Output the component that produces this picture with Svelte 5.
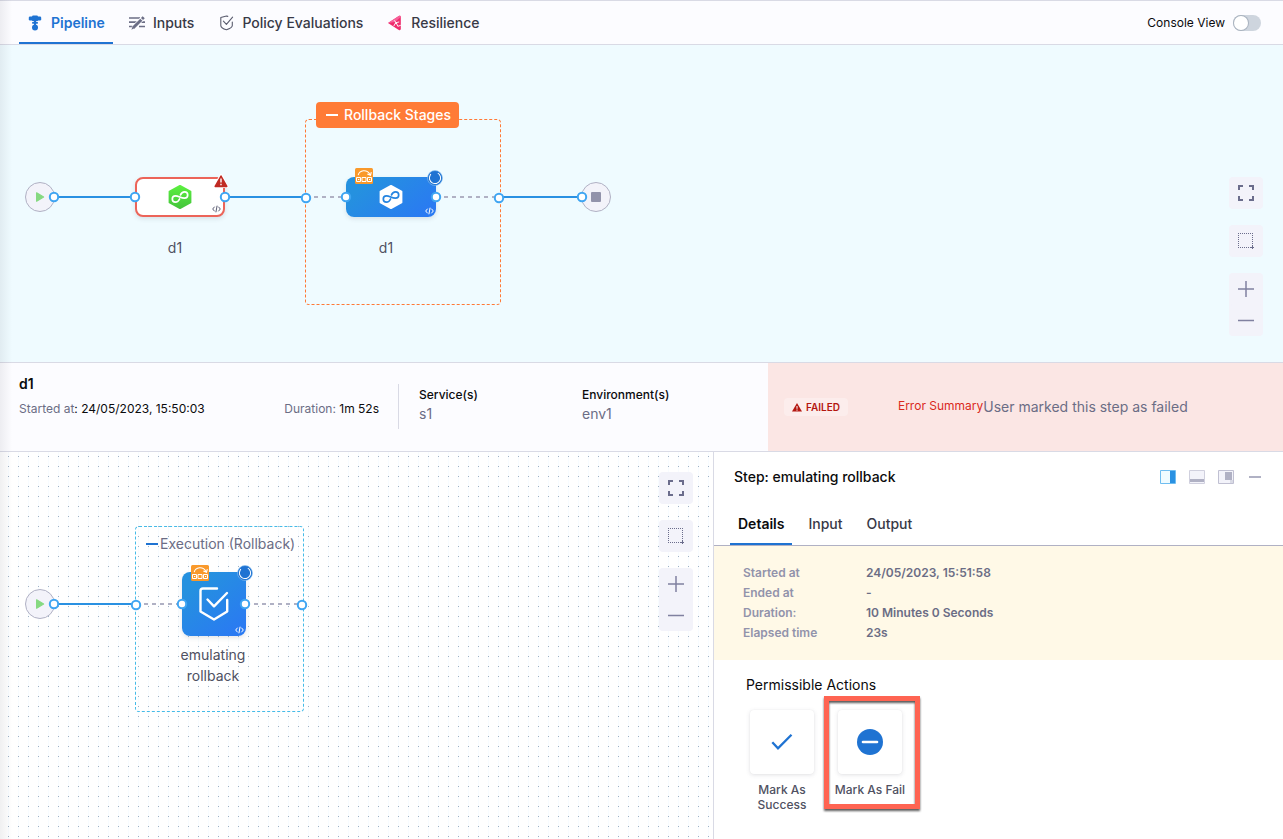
<script>
  let consoleView = $state(false);
  let activeTab = $state('Pipeline');
  let activeStepTab = $state('Details');

  const tabs = ['Pipeline', 'Inputs', 'Policy Evaluations', 'Resilience'];
  const stepTabs = ['Details', 'Input', 'Output'];
  const details = [
    ['Started at', '24/05/2023, 15:51:58'],
    ['Ended at', '-'],
    ['Duration:', '10 Minutes 0 Seconds'],
    ['Elapsed time', '23s']
  ];
  const stagePorts = [[54, 152], [135, 152], [225, 152], [306, 153], [346, 152], [436, 152], [499, 153], [582, 152]];
  const stepPorts = [[54, 152], [136, 153], [182, 152], [245, 152], [302, 153]];
</script>

{#snippet ports(list)}
  <svg class="layer" aria-hidden="true">
    {#each list as [x, y]}
      <circle cx={x} cy={y} r="4.2" fill="#fff" stroke="#3fa5f2" stroke-width="2" />
    {/each}
  </svg>
{/snippet}

{#snippet startNode()}
  <div class="node terminal start">
    <svg width="10" height="12" viewBox="0 0 10 12"><path d="M1.6 1.8v8.4L8.6 6z" fill="#86d981" stroke="#86d981" stroke-width="1.2" stroke-linejoin="round" /></svg>
  </div>
{/snippet}

{#snippet infinity(color)}
  <path d="M11.600 14C10.600 16.200 9.300 17.200 7.500 17.200A3.200 3.200 0 1 1 7.500 10.800C10.500 10.800 13.300 13.400 16.500 13.200A3.200 3.200 0 1 0 16.500 6.800C14.600 6.800 13.300 7.900 12.500 9.900" fill="none" stroke={color} stroke-width="1.700" stroke-linecap="round" />
{/snippet}

{#snippet code(color)}
  <svg class="code" width="9" height="8" viewBox="0 0 9 8" fill="none" stroke={color} stroke-width="1"><path d="M2.600 1.700.7 4l1.900 2.300M6.400 1.700 8.300 4 6.400 6.300M5.100.7 3.900 7.300" /></svg>
{/snippet}

{#snippet rollbackBadge()}
  <svg class="rollback" width="18" height="16" viewBox="0 0 18 16">
    <rect width="18" height="16" rx="1.500" fill="#f9992b" />
    <path d="M3.200 7.200C4.400 1.900 12 1 15 6.400M12.300 6.100l3.200 1.200.8-3.100" fill="none" stroke="#fff" stroke-width="1.100" />
    <path d="M1.500 9.500h4v4h-4zM7 9.500h4v4H7zM12.500 9.500h4v4h-4z" fill="none" stroke="#fff" stroke-width="1" />
    <path d="M3 11.500h1.300M14 11.500h1.200" stroke="#fff" stroke-width="1" />
  </svg>
{/snippet}

{#snippet runningBadge()}
  <svg class="running" width="16" height="16" viewBox="0 0 16 16">
    <circle cx="8" cy="8" r="7.500" fill="#1f73d2" stroke="#8fc4f4" stroke-width=".6" />
    <circle cx="8" cy="8" r="5.600" fill="none" stroke="#fff" stroke-width="1" stroke-dasharray="27 8.200" transform="rotate(-60 8 8)" />
  </svg>
{/snippet}

{#snippet canvasTools()}
  <div class="tools">
    <button aria-label="Fit to screen"><svg width="16" height="16" viewBox="0 0 16 16" fill="none" stroke="#6b6d8c" stroke-width="2"><path d="M1 5V1h4M11 1h4v4M15 11v4h-4M5 15H1v-4" /></svg></button>
    <button aria-label="Select area"><svg width="16" height="16" viewBox="0 0 16 16" fill="none" stroke="#6b6d8c" stroke-width="1"><path d="M0 .5h15M0 14.500h15M.5 0v15M14.500 0v15" stroke-dasharray="1 1" /><path d="M14.500 13v3M13 14.500h3" /></svg></button>
    <div class="zoom">
      <button aria-label="Zoom in"><svg width="16" height="16" viewBox="0 0 16 16" stroke="#8081a0" stroke-width="1.500"><path d="M0 8h16M8 0v16" /></svg></button>
      <button aria-label="Zoom out"><svg width="16" height="16" viewBox="0 0 16 16" stroke="#8081a0" stroke-width="1.500"><path d="M0 7.500h16" /></svg></button>
    </div>
  </div>
{/snippet}

<div class="page">
  <header>
    <nav class="tabs">
      {#each tabs as tab}
        <button class="tab" class:active={tab === activeTab} onclick={() => (activeTab = tab)}>
          {#if tab === 'Pipeline'}
            <svg width="16" height="16" viewBox="0 0 16 16" fill="#1f73d2"><rect x="5" y=".5" width="6" height="5.800" rx="1.200" /><rect x="1.800" y="1.500" width="12.400" height="4" rx="1.200" /><path d="M7 6h2v4H7z" /><rect x="5" y="7" width="6" height="1.800" rx=".7" /><circle cx="8" cy="12.500" r="3" /></svg>
          {:else if tab === 'Inputs'}
            <svg width="16" height="16" viewBox="0 0 16 16" fill="none" stroke="#6b6d85"><path d="M0 3h11M0 7.200h8M0 11.500h4M10 11.500h6M12 7.200h4" stroke-width="1.700" /><path d="M4.200 12.800 14 3" stroke="#fcfcff" stroke-width="4.500" /><path d="m4 13 8.300-8.300" stroke-width="3" /><path d="m13 4 1.700-1.700" stroke-width="3" /><path d="m2.300 14.700 1.200-2.400 1.300 1.200z" fill="#6b6d85" stroke="none" /></svg>
          {:else if tab === 'Policy Evaluations'}
            <svg width="16" height="16" viewBox="0 0 16 16" fill="none" stroke="#5a5c6e" stroke-width="1.100" stroke-linecap="round" stroke-linejoin="round"><path d="M9.800 1.400 8.500 1 2.800 2.500v8c0 1.900 3.500 3.700 5.700 4.300 2.400-.8 5.800-2.400 5.800-4.300V7M5.400 6.200l3 3.200 6.200-7.200" /></svg>
          {:else}
            <svg width="16" height="16" viewBox="0 0 16 16"><path d="M1 8.100 11.800 1c1-.6 2 0 2 1v12c0 1-1 1.500-2 1z" fill="#ee2b6c" /><path d="M1 8.100 11.800 1c1-.6 2 0 2 1L8 7z" fill="#f7609a" /><path d="m7.200 5.300 2 2.400 3-.8M6.800 11l1.800-3.200M9.300 7.800l1.500 3.500 3-1" fill="none" stroke="#fff" stroke-width=".9" /><circle cx="9" cy="8" r="1" fill="#fff" /></svg>
          {/if}
          <span>{tab}</span>
        </button>
      {/each}
    </nav>
    <label class="switch">Console View <input type="checkbox" role="switch" bind:checked={consoleView} /></label>
  </header>

  <section class="canvas stages" aria-label="Stages">
    <svg class="layer" aria-hidden="true">
      <path d="M54 152H306M499 152H582" stroke="#2a91e2" stroke-width="2" />
      <path d="M314 152H341M444 152H494" stroke="#b0b1c4" stroke-width="2" stroke-dasharray="4 4" />
    </svg>
    {@render startNode()}
    <div class="node group rollback-group"></div>
    <button class="node group-label"><svg width="12" height="2" viewBox="0 0 12 2"><path d="M0 1h12" stroke="#fff" stroke-width="2" /></svg>Rollback Stages</button>

    <div class="node stage failed">
      <svg width="24" height="24" viewBox="0 0 24 24">
        <defs><linearGradient id="cd" x1="0" y1="0" x2="0" y2="1"><stop stop-color="#5aef3f" /><stop offset="1" stop-color="#45c53c" /></linearGradient></defs>
        <path d="M12 1 22.400 6.600v10.800L12 23 1.600 17.400V6.600z" fill="url(#cd)" stroke="url(#cd)" stroke-width="2" stroke-linejoin="round" />
        {@render infinity('#fff')}
      </svg>
      {@render code('#5a5c72')}
      <svg class="warn" width="16" height="15" viewBox="0 0 16 15"><path d="M8 1.500 14 12.500H2z" fill="#c02b23" stroke="#fff" stroke-width="3" stroke-linejoin="round" /><path d="M8 2 13.800 12.400H2.200z" fill="#c02b23" stroke="#c02b23" stroke-width="1.500" stroke-linejoin="round" /><path d="M8 4.500v4M8 9.800v1.400" stroke="#fff" stroke-width="1.400" /></svg>
    </div>
    <div class="node caption first">d1</div>

    <div class="node stage running-stage">
      <svg width="24" height="24" viewBox="0 0 24 24">
        <path d="M12 1 22.400 6.600v10.800L12 23 1.600 17.400V6.600z" fill="#fff" stroke="#fff" stroke-width="2" stroke-linejoin="round" />
        {@render infinity('#2484e0')}
      </svg>
      {@render code('#fff')}
      {@render rollbackBadge()}
      {@render runningBadge()}
    </div>
    <div class="node caption second">d1</div>

    <div class="node terminal end"><i></i></div>
    {@render ports(stagePorts)}
    {@render canvasTools()}
  </section>

  <section class="summary">
    <div class="facts">
      <div class="run">
        <h2>d1</h2>
        <div class="times">
          <span><em>Started at</em>: 24/05/2023, 15:50:03</span>
          <span><em>Duration:</em> 1m 52s</span>
        </div>
      </div>
      <div class="fact"><strong>Service(s)</strong><span>s1</span></div>
      <div class="fact"><strong>Environment(s)</strong><span>env1</span></div>
    </div>
    <div class="error">
      <span class="chip"><svg width="10" height="9" viewBox="0 0 10 9"><path d="M5 0 10 8.500H0z" fill="#b41710" /><path d="M5 3v2.800M5 6.500v1.200" stroke="#fff" stroke-width="1" /></svg>FAILED</span>
      <span class="error-title">Error Summary</span><span class="error-text">User marked this step as failed</span>
    </div>
  </section>

  <div class="lower">
    <section class="canvas steps" aria-label="Steps">
      <svg class="layer" aria-hidden="true">
        <defs><pattern id="dots" width="10" height="10" patternUnits="userSpaceOnUse"><rect x="8" width="1" height="10" fill="#f8fcff" /><rect x="8" y="4" width="1" height="1" fill="#9fb2c6" /></pattern></defs>
        <rect width="100%" height="100%" fill="url(#dots)" />
        <path d="M54 152H136" stroke="#2a91e2" stroke-width="2" />
        <path d="M144 152H177M254 152H298" stroke="#b0b1c4" stroke-width="2" stroke-dasharray="4 4" />
      </svg>
      {@render startNode()}
      <div class="node group exec-group">
        <button><svg width="12" height="2" viewBox="0 0 12 2"><path d="M0 1h12" stroke="#1f73d2" stroke-width="2" /></svg>Execution (Rollback)</button>
      </div>
      <div class="node step">
        <svg width="32" height="36" viewBox="0 0 32 36" fill="none" stroke="#fff" stroke-width="2.400" stroke-linecap="round" stroke-linejoin="round"><path d="M19 2.500H5c-1.500 0-2.500 1-2.500 2.500v20.500L16 33.500l13.200-8V14M9.500 13.500l6.500 6.800L29 7" /></svg>
        {@render code('#fff')}
        {@render rollbackBadge()}
        {@render runningBadge()}
      </div>
      <div class="node caption step-name">emulating rollback</div>
      {@render ports(stepPorts)}
      {@render canvasTools()}
    </section>

    <aside>
      <div class="panel-head">
        <h2>Step: emulating rollback</h2>
        <div class="layouts">
          <button aria-label="Dock right"><svg width="16" height="14" viewBox="0 0 16 14"><path d="M.5.500h15v13H.5z" fill="#effbff" stroke="#6fbdf0" /><path d="M10 1h5v12h-5z" fill="#2a91e2" /></svg></button>
          <button aria-label="Dock bottom"><svg width="16" height="14" viewBox="0 0 16 14"><path d="M.5.500h15v13H.5z" fill="#f3f3fa" stroke="#d0d0de" /><path d="M1 9h14v3H1z" fill="#b0b1c4" /></svg></button>
          <button aria-label="Float"><svg width="16" height="14" viewBox="0 0 16 14"><path d="M.5.500h15v13H.5z" fill="#f3f3fa" stroke="#c0c0d2" /><path d="M7 2h7v8H7z" fill="#b0b1c4" /><path d="M12 10h3v3h-3z" fill="#d9dae5" /></svg></button>
          <button aria-label="Minimise"><svg width="12" height="14" viewBox="0 0 12 14"><path d="M0 7h12" stroke="#b0b1c4" stroke-width="2" /></svg></button>
        </div>
      </div>
      <nav class="step-tabs">
        {#each stepTabs as tab}
          <button class:active={tab === activeStepTab} onclick={() => (activeStepTab = tab)}>{tab}</button>
        {/each}
      </nav>
      <dl>
        {#each details as [name, value]}
          <dt>{name}</dt><dd>{value}</dd>
        {/each}
      </dl>
      <div class="actions">
        <h3>Permissible Actions</h3>
        <div class="action-row">
          <button class="action">
            <span class="tile"><svg width="22" height="18" viewBox="0 0 22 18"><path d="m1.300 9.300 5.700 6L20.500 1.800" fill="none" stroke="#1f73d2" stroke-width="2.300" /></svg></span>
            Mark As Success
          </button>
          <button class="action outlined">
            <span class="tile"><svg width="26" height="26" viewBox="0 0 26 26"><circle cx="13" cy="13" r="13" fill="#1f73d2" /><path d="M6 13h14" stroke="#fff" stroke-width="2.600" stroke-linecap="round" /></svg></span>
            Mark As Fail
          </button>
        </div>
      </div>
    </aside>
  </div>
</div>

<style>
  :global(body) { margin: 0; }
  .page {
    position: relative;
    display: flex;
    flex-direction: column;
    min-height: 100vh;
    font-family: Inter, sans-serif;
    font-size: 14px;
    line-height: 20px;
    color: #0b0b0d;
    background: #fff;
  }
  .page::after {
    content: '';
    position: absolute;
    inset: 0 auto 0 0;
    width: 12px;
    background: linear-gradient(90deg, rgba(40, 41, 61, 0.07), rgba(40, 41, 61, 0));
    pointer-events: none;
  }
  button {
    padding: 0;
    border: 0;
    background: none;
    font: inherit;
    color: inherit;
    cursor: pointer;
  }
  svg { display: block; flex: none; }
  h2, h3, dl, dd { margin: 0; }
  * { box-sizing: border-box; }

  header {
    display: flex;
    justify-content: space-between;
    height: 45px;
    padding: 0 22px 0 19px;
    border: solid #d9dae5;
    border-width: 1px 0;
    background: #fcfcff;
  }
  .tabs { display: flex; gap: 8px; }
  .tab {
    display: flex;
    align-items: center;
    gap: 8px;
    padding: 2px 8px 0;
    border-bottom: 2px solid transparent;
    font-weight: 500;
    color: #383946;
  }
  .tab.active { color: #1f73d2; font-weight: 600; border-color: #1f73d2; }
  .switch { display: flex; align-items: center; gap: 8px; font-size: 12px; }
  .switch input {
    appearance: none;
    width: 28px;
    height: 16px;
    margin: 0;
    padding: 1px;
    border-radius: 8px;
    background: #ced5de;
  }
  .switch input::before {
    content: '';
    display: block;
    width: 14px;
    height: 14px;
    border-radius: 50%;
    background: #fff;
    box-shadow: 0 0 0 1px #a9b3bf;
  }
  .switch input:checked { background: #1f73d2; padding-left: 13px; }

  .canvas { position: relative; overflow: hidden; }
  .stages { height: 318px; background: #effbff; border-bottom: 1px solid #d9dae5; }
  .layer { position: absolute; inset: 0; width: 100%; height: 100%; pointer-events: none; }
  .node { position: absolute; }
  .terminal {
    display: grid;
    place-items: center;
    top: 137px;
    width: 30px;
    height: 30px;
    border: 1px solid #b0b1c4;
    border-radius: 50%;
    background: #f3f3fa;
  }
  .start { left: 25px; }
  .end { left: 581px; }
  .end i { width: 10px; height: 10px; border-radius: 1px; background: #9293ab; }
  .group { border: 1px dashed; border-radius: 4px; }
  .rollback-group { left: 305px; top: 74px; width: 196px; height: 186px; border-color: #ff7935; }
  .group-label {
    left: 316px;
    top: 57px;
    display: flex;
    align-items: center;
    gap: 6px;
    height: 26px;
    padding: 0 8px 0 10px;
    border-radius: 4px;
    background: #ff7b36;
    color: #fff;
    font-weight: 500;
  }
  .stage, .step {
    display: grid;
    place-items: center;
    border-radius: 8px;
    box-shadow: 0 2px 4px rgba(96, 97, 112, 0.16);
  }
  .stage { top: 132px; width: 90px; height: 40px; }
  .failed { left: 135px; border: 2px solid #ec6459; background: #fff; }
  .running-stage { left: 346px; }
  .running-stage, .step { background: linear-gradient(140deg, #2591df 20%, #2a7af2 90%); }
  .code { position: absolute; right: 2px; bottom: 2px; }
  .warn { position: absolute; right: -6px; top: -5px; }
  .rollback { position: absolute; left: 9px; top: -9px; }
  .step .rollback { top: -7px; }
  .running { position: absolute; right: -7px; top: -7px; }
  .caption { text-align: center; color: #4f5162; }
  .first, .second { top: 193px; width: 80px; }
  .first { left: 135px; }
  .second { left: 346px; }

  .tools { position: absolute; top: 20px; right: 20px; display: grid; gap: 16px; }
  .stages .tools { top: 132px; }
  .tools button { display: grid; place-items: center; width: 34px; height: 32px; border-radius: 4px; background: #f3f3fa; }
  .tools .zoom button:last-child { height: 31px; }
  .zoom { border-radius: 4px; background: #f3f3fa; overflow: hidden; }

  .summary { display: flex; min-height: 89px; border-bottom: 1px solid #d9dae5; }
  .facts { flex: 0 1 768px; display: flex; padding: 11px 0 0 19px; background: #fcfcff; }
  .run { position: relative; flex: 0 0 380px; padding-right: 20px; }
  .run::after {
    content: '';
    position: absolute;
    right: 0;
    top: 10px;
    height: 45px;
    border-left: 1px solid #d9dae5;
  }
  h2 { font-size: 14px; font-weight: 600; line-height: 20px; }
  .times { display: flex; justify-content: space-between; margin-top: 5px; font-size: 12px; }
  em { font-style: normal; color: #6b6d85; }
  .fact { display: flex; flex-direction: column; width: 143px; margin: 12px 0 0 20px; color: #6b6d85; }
  .fact strong { font-size: 12px; font-weight: 500; color: #0b0b0d; line-height: 18px; }
  .error { flex: 1; display: flex; align-items: center; padding: 0 16px; background: #fbe6e4; }
  .chip {
    display: flex;
    align-items: center;
    gap: 4px;
    height: 18px;
    padding: 0 8px;
    margin-right: 50px;
    border-radius: 4px;
    background: #fcedec;
    color: #b41710;
    font-size: 10px;
    font-weight: 600;
  }
  .error-title { padding-bottom: 3px; font-size: 12px; color: #da291d; }
  .error-text { color: #6b6d85; }

  .lower { flex: 1; display: flex; }
  .steps {
    flex: 0 1 714px;
    border-right: 1px solid #d9dae5;
    background: #fff;
  }
  .exec-group { left: 135px; top: 74px; width: 169px; height: 186px; padding: 7px 0 0 10px; border-color: #45bbe8; }
  .exec-group button { display: flex; align-items: center; gap: 2px; color: #6b6d85; }
  .step { left: 182px; top: 120px; width: 64px; height: 64px; }
  .step-name { left: 173px; top: 192px; width: 80px; line-height: 21px; }

  aside { flex: 1; min-width: 0; background: #fff; }
  .panel-head { display: flex; justify-content: space-between; align-items: center; padding: 15px 22px 0 20px; }
  .panel-head h2 { font-weight: 500; }
  .layouts { display: flex; gap: 13px; }
  .layouts button:last-child { margin-left: 2px; }
  .step-tabs { display: flex; gap: 8px; margin-top: 15px; padding: 0 16px; border-bottom: 1px solid #b0b1c4; }
  .step-tabs button { padding: 12px 8px 9px; border-bottom: 2px solid transparent; font-weight: 500; color: #383946; }
  .step-tabs .active { font-weight: 600; color: #0b0b0d; border-color: #1f73d2; }
  dl {
    display: grid;
    grid-template-columns: 123px 1fr;
    padding: 17px 29px;
    background: #fff9e7;
    font-size: 12px;
    font-weight: 600;
    color: #6b6d85;
  }
  dt { color: #9293ab; }
  .actions { padding: 15px 32px; }
  h3 { font-size: 14px; font-weight: 400; }
  .action-row { display: flex; align-items: flex-start; gap: 16px; margin-top: 15px; }
  .action {
    position: relative;
    display: flex;
    flex-direction: column;
    align-items: center;
    gap: 8px;
    width: 72px;
    font-size: 12px;
    font-weight: 500;
    line-height: 15px;
    color: #4f5162;
  }
  .tile {
    display: grid;
    place-items: center;
    width: 64px;
    height: 64px;
    border-radius: 4px;
    background: #fff;
    box-shadow: 0 0 1px rgba(40, 41, 61, 0.08), 0 1px 4px rgba(96, 97, 112, 0.18);
  }
  .outlined::after {
    content: '';
    position: absolute;
    inset: -14px -14px -12px -10px;
    border: 5px solid #ff6452;
    filter: drop-shadow(0 2px 1px rgba(0, 0, 0, 0.65));
    pointer-events: none;
  }
</style>
